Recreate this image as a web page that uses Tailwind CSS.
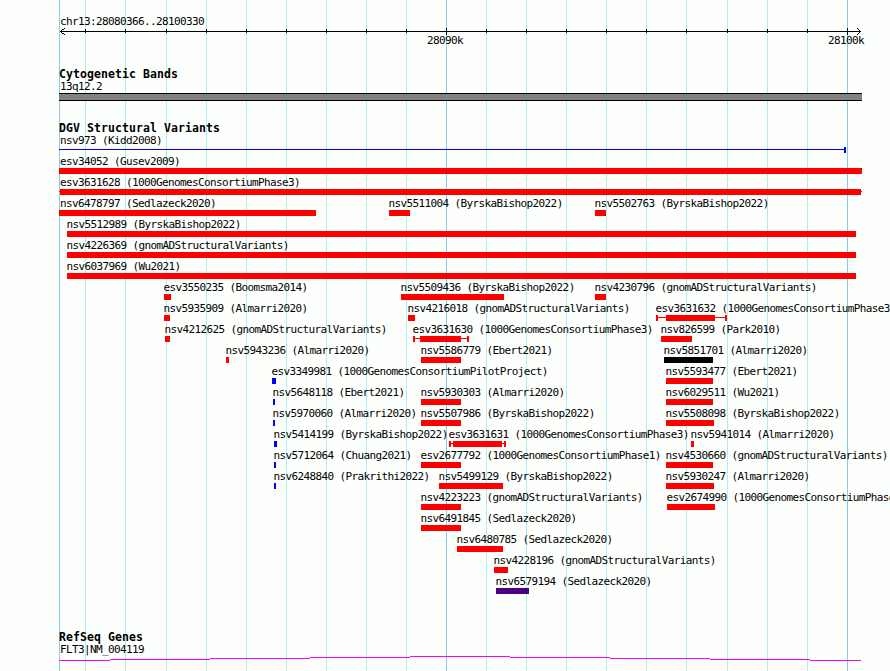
<!DOCTYPE html>
<html lang="en">
<head>
<meta charset="utf-8">
<title>chr13:28080366..28100330</title>
<script src="https://cdn.jsdelivr.net/npm/@tailwindcss/browser@4"></script>
</head>
<body class="bg-[#fdfffc] overflow-hidden">
<main class="relative w-[890px] h-[671px] overflow-hidden flex flex-col text-black whitespace-nowrap text-[11px] leading-[13px] tracking-[-0.622px] font-['DejaVu_Sans_Mono',monospace]">
  <div id="grid" class="absolute inset-0"></div>

  <header class="relative h-[68px] pt-[15px] shrink-0">
    <div class="pl-[60px]">chr13:28080366..28100330</div>
    <svg id="ruler" class="block" width="890" height="7" viewBox="0 28 890 7" shape-rendering="crispEdges" fill="none" stroke="#000">
      <path d="M60 31.5H861"/>
      <path d="M64.5 28v1M63.5 29v1M62.5 29v1M61.5 30v1M61.5 32v1M62.5 33v1M63.5 33v1M64.5 34v1M857.5 28v1M858.5 29v1M859.5 30v1M859.5 32v1M858.5 33v1M857.5 34v1"/>
    </svg>
    <div class="flex pl-[427px] -mt-px"><span class="w-[401px]">28090k</span><span>28100k</span></div>
  </header>

  <section class="relative h-[54px] shrink-0">
    <h2 class="pl-[59px] font-bold text-[11.5px] tracking-[0.077px] h-[12px]">Cytogenetic Bands</h2>
    <div class="pl-[60px] h-[13px]">13q12.2</div>
    <div class="ml-[59px] w-[803px] h-[8px] border-y border-black bg-[#848084]"></div>
  </section>

  <section class="relative h-[509px] shrink-0">
    <h2 class="pl-[59px] font-bold text-[11.5px] tracking-[0.077px] h-[12px]">DGV Structural Variants</h2>
    <div id="variants"></div>
  </section>

  <section class="relative shrink-0">
    <h2 class="pl-[59px] font-bold text-[11.5px] tracking-[0.077px] h-[12px]">RefSeq Genes</h2>
    <div class="pl-[60px] h-[13px]">FLT3|NM_004119</div>
    <svg class="block" width="890" height="6" viewBox="0 656 890 6" shape-rendering="crispEdges" fill="none" stroke="#f0f">
      <path d="M59 660.5H110M110 659.5H210M210 658.5H310M310 657.5H410M410 656.5H510M510 657.5H610M610 658.5H710M710 659.5H810M810 660.5H861"/>
    </svg>
  </section>
</main>
<script>
const xs = [59,85,125,166,206,246,286,326,366,406,446,486,526,566,606,646,686,727,767,807,847];
const major = [59,446,847];
document.getElementById('grid').innerHTML = xs.map(x =>
  `<i class="absolute inset-y-0 w-px ${major.includes(x) ? 'bg-[#87ceeb]' : 'bg-[#afeeee]'}" style="left:${x}px"></i>`).join('');
document.getElementById('ruler').innerHTML += xs.slice(1).map(x =>
  `<path d="M${x}.5 ${major.includes(x) ? '28V35' : '29V33'}"/>`).join('');

const R = 'bg-[#ff0000]', B = 'bg-[#0000ff]', K = 'bg-black', P = 'bg-[#4b0082]';
// [label, start, end, colour, body start, body end]
const rows = [
 [['nsv973 (Kidd2008)',59,846,B,844,846]],
 [['esv34052 (Gusev2009)',59,862,R]],
 [['esv3631628 (1000GenomesConsortiumPhase3)',59,862,R,60,861]],
 [['nsv6478797 (Sedlazeck2020)',59,316,R],['nsv5511004 (ByrskaBishop2022)',389,410,R],['nsv5502763 (ByrskaBishop2022)',595,606,R]],
 [['nsv5512989 (ByrskaBishop2022)',67,856,R]],
 [['nsv4226369 (gnomADStructuralVariants)',67,856,R]],
 [['nsv6037969 (Wu2021)',67,856,R]],
 [['esv3550235 (Boomsma2014)',164,171,R],['nsv5509436 (ByrskaBishop2022)',401,504,R],['nsv4230796 (gnomADStructuralVariants)',595,606,R]],
 [['nsv5935909 (Almarri2020)',164,170,R],['nsv4216018 (gnomADStructuralVariants)',408,415,R],['esv3631632 (1000GenomesConsortiumPhase3)',656,727,R,666,715]],
 [['nsv4212625 (gnomADStructuralVariants)',165,170,R],['esv3631630 (1000GenomesConsortiumPhase3)',413,469,R,420,461],['nsv826599 (Park2010)',661,692,R]],
 [['nsv5943236 (Almarri2020)',226,229,R],['nsv5586779 (Ebert2021)',421,461,R],['nsv5851701 (Almarri2020)',664,713,K]],
 [['esv3349981 (1000GenomesConsortiumPilotProject)',272,276,B],['nsv5593477 (Ebert2021)',666,713,R]],
 [['nsv5648118 (Ebert2021)',273,275,B],['nsv5930303 (Almarri2020)',421,461,R],['nsv6029511 (Wu2021)',666,713,R]],
 [['nsv5970060 (Almarri2020)',273,275,B],['nsv5507986 (ByrskaBishop2022)',421,461,R],['nsv5508098 (ByrskaBishop2022)',666,714,R]],
 [['nsv5414199 (ByrskaBishop2022)',274,277,B],['esv3631631 (1000GenomesConsortiumPhase3)',449,506,R,453,502],['nsv5941014 (Almarri2020)',691,694,R]],
 [['nsv5712064 (Chuang2021)',274,276,B],['esv2677792 (1000GenomesConsortiumPhase1)',421,461,R],['nsv4530660 (gnomADStructuralVariants)',666,713,R]],
 [['nsv6248840 (Prakrithi2022)',274,276,B],['nsv5499129 (ByrskaBishop2022)',439,503,R],['nsv5930247 (Almarri2020)',666,714,R]],
 [['nsv4223223 (gnomADStructuralVariants)',421,461,R],['esv2674990 (1000GenomesConsortiumPhase3)',667,715,R]],
 [['nsv6491845 (Sedlazeck2020)',421,461,R]],
 [['nsv6480785 (Sedlazeck2020)',457,503,R]],
 [['nsv4228196 (gnomADStructuralVariants)',494,508,R]],
 [['nsv6579194 (Sedlazeck2020)',496,529,P]],
];
document.getElementById('variants').innerHTML = rows.map(row => `<div class="relative h-[21px]">` + row.map(([t, s, e, c, bs, be]) => {
  let g = '';
  if (bs === undefined) g = `<i class="absolute top-[13px] left-0 h-[6px] ${c}" style="width:${e - s}px"></i>`;
  else {
    g = `<i class="absolute top-[15px] left-0 h-px ${c}" style="width:${e - s}px"></i>` +
        `<i class="absolute top-[13px] h-[6px] ${c}" style="left:${bs - s}px;width:${be - bs}px"></i>`;
    if (s > 59) g += `<i class="absolute top-[13px] left-0 w-[2px] h-[6px] ${c}"></i><i class="absolute top-[13px] h-[6px] w-[2px] ${c}" style="left:${e - s - 2}px"></i>`;
  }
  return `<div class="absolute top-0" style="left:${s}px"><span class="block" style="margin-left:${s === 59 ? 1 : -0.4}px">${t}</span>${g}</div>`;
}).join('') + '</div>').join('');
</script>
</body>
</html>
